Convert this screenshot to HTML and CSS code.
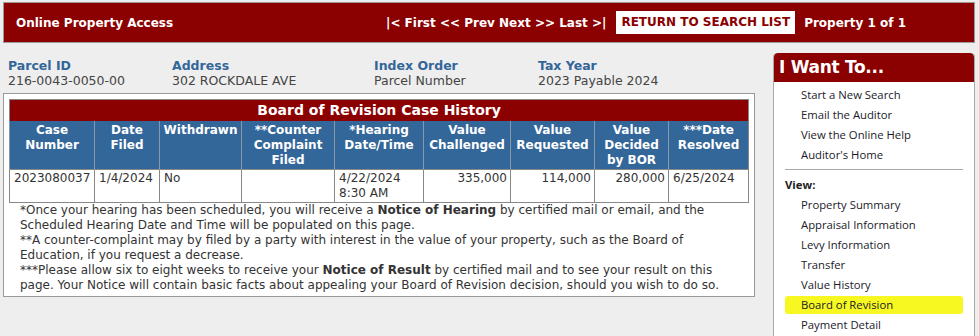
FILE: index.html
```html
<!DOCTYPE html>
<html lang="en">
<head>
  <meta charset="UTF-8">
  <title>Online Property Access - Board of Revision</title>
  <link rel="stylesheet" href="styles.css">
</head>
<body>
  <!-- top bar -->
  <div class="topbar">
    <div class="site-title">Online Property Access</div>
    <div class="pager">|&lt; First &lt;&lt; Prev Next &gt;&gt; Last &gt;|</div>
    <a class="return-btn" href="#">RETURN TO SEARCH LIST</a>
    <div class="counter">Property 1 of 1</div>
  </div>

  <div class="page">
    <div class="main">
      <!-- parcel info -->
      <div class="info">
        <div class="info-col">
          <div class="info-label">Parcel ID</div>
          <div class="info-value">216-0043-0050-00</div>
        </div>
        <div class="info-col">
          <div class="info-label">Address</div>
          <div class="info-value">302 ROCKDALE AVE</div>
        </div>
        <div class="info-col">
          <div class="info-label">Index Order</div>
          <div class="info-value">Parcel Number</div>
        </div>
        <div class="info-col">
          <div class="info-label">Tax Year</div>
          <div class="info-value">2023 Payable 2024</div>
        </div>
      </div>

      <!-- case history -->
      <div class="box">
        <table class="bor-table">
          <colgroup>
            <col style="width:85px"><col style="width:65px"><col style="width:82px">
            <col style="width:93px"><col style="width:89px"><col style="width:87px">
            <col style="width:84px"><col style="width:74px"><col style="width:80px">
          </colgroup>
          <tr>
            <td class="table-title" colspan="9">Board of Revision Case History</td>
          </tr>
          <tr class="head-row">
            <th>Case Number</th>
            <th>Date Filed</th>
            <th>Withdrawn</th>
            <th>**Counter Complaint Filed</th>
            <th>*Hearing Date/Time</th>
            <th>Value Challenged</th>
            <th>Value Requested</th>
            <th>Value Decided by BOR</th>
            <th>***Date Resolved</th>
          </tr>
          <tr class="data-row">
            <td>2023080037</td>
            <td>1/4/2024</td>
            <td>No</td>
            <td></td>
            <td>4/22/2024<br>8:30 AM</td>
            <td class="num">335,000</td>
            <td class="num">114,000</td>
            <td class="num">280,000</td>
            <td>6/25/2024</td>
          </tr>
        </table>

        <div class="notes">
          <p>*Once your hearing has been scheduled, you will receive a <b>Notice of Hearing</b> by certified mail or email, and the<br>Scheduled Hearing Date and Time will be populated on this page.</p>
          <p>**A counter-complaint may by filed by a party with interest in the value of your property, such as the Board of<br>Education, if you request a decrease.</p>
          <p>***Please allow six to eight weeks to receive your <b>Notice of Result</b> by certified mail and to see your result on this<br>page. Your Notice will contain basic facts about appealing your Board of Revision decision, should you wish to do so.</p>
        </div>
      </div>
    </div>

    <!-- side menu -->
    <div class="sidebar">
      <div class="side-head">I Want To...</div>
      <div class="side-body">
        <ul class="side-links">
          <li><a href="#">Start a New Search</a></li>
          <li><a href="#">Email the Auditor</a></li>
          <li><a href="#">View the Online Help</a></li>
          <li><a href="#">Auditor's Home</a></li>
        </ul>
        <hr class="side-rule">
        <div class="side-section">View:</div>
        <ul class="side-links">
          <li><a href="#">Property Summary</a></li>
          <li><a href="#">Appraisal Information</a></li>
          <li><a href="#">Levy Information</a></li>
          <li><a href="#">Transfer</a></li>
          <li><a href="#">Value History</a></li>
          <li class="current"><a href="#">Board of Revision</a></li>
          <li><a href="#">Payment Detail</a></li>
        </ul>
      </div>
    </div>
  </div>
</body>
</html>
```

FILE: styles.css
```css
body {
  margin: 0;
  padding: 2px 4px 0 3px;
  background: #eeeeee;
  font-family: "DejaVu Sans", Verdana, sans-serif;
  font-size: 12px;
  color: #333;
  overflow: hidden;
}

a {
  text-decoration: none;
}

/* top bar */
.topbar {
  display: grid;
  grid-template-columns: 382px auto auto auto 1fr;
  align-items: center;
  height: 39px;
  background: #8b0000;
  border: 1px solid #9a9a9a;
  color: #fff;
  font-weight: bold;
}

.site-title {
  padding-left: 12px;
}

.return-btn {
  margin-left: 10px;
  padding: 4px 5px;
  line-height: 15px;
  background: #fff;
  color: #8b0000;
}

.counter {
  margin-left: 9px;
}

/* page layout */
.page {
  display: flex;
  gap: 18px;
}

.main {
  width: 752px;
}

/* parcel info */
.info {
  display: grid;
  grid-template-columns: 164px 202px 164px 1fr;
  padding: 15px 0 0 5px;
  font-size: 12.5px;
  line-height: 15px;
}

.info-label {
  font-weight: bold;
  color: #336699;
}

.info-value {
  color: #444;
}

/* case history box */
.box {
  margin-top: 5px;
  background: #fff;
  border: 1px solid #999;
  padding: 5px 5px 3px;
}

.bor-table {
  width: 740px;
  table-layout: fixed;
  border-collapse: collapse;
  border: 1px solid #888;
  line-height: 15px;
}

.table-title {
  background: #8b0000;
  color: #fff;
  font-weight: bold;
  font-size: 14px;
  text-align: center;
  height: 21px;
  padding: 0;
}

.head-row th {
  background: #336699;
  color: #fff;
  font-weight: bold;
  vertical-align: top;
  padding: 2px 2px 1px;
  border-left: 1px solid #8899aa;
  height: 45px;
}

.data-row td {
  vertical-align: top;
  padding: 1px 3px 0 4px;
  border: 1px solid #888;
  height: 31px;
  white-space: nowrap;
}

.data-row .num {
  text-align: right;
  padding-right: 3px;
}

.notes {
  padding-left: 11px;
  line-height: 15px;
  white-space: nowrap;
}

.notes p {
  margin: 0;
}

/* side menu */
.sidebar {
  width: 200px;
  height: 283px;
  overflow: hidden;
  margin-top: 10px;
  border: 1px solid #aaa;
  border-top: none;
  border-bottom: none;
  border-radius: 4px 4px 0 0;
  background: #fff;
  font-family: "Open Sans", "Noto Sans", sans-serif;
  font-size: 11.3px;
}

.side-head {
  height: 29px;
  line-height: 29px;
  padding-left: 5px;
  background: #8b0000;
  border-radius: 4px 4px 0 0;
  color: #fff;
  font-family: "DejaVu Sans", sans-serif;
  font-weight: bold;
  font-size: 17px;
  letter-spacing: -0.3px;
}

.side-body {
  padding-top: 2px;
}

.side-links {
  list-style: none;
  margin: 0;
  padding: 0;
}

.side-links li {
  margin: 2px 11px 0;
  padding-left: 16px;
  line-height: 18px;
  border-radius: 3px;
}

.side-links a {
  color: #1a1a2a;
}

.side-links li.current {
  background: #f7f722;
}

.side-rule {
  margin: 5px 11px 6px;
  border: none;
  border-top: 1px solid #aaa;
}

.side-section {
  margin-left: 11px;
  line-height: 18px;
  font-weight: bold;
  color: #222;
}
```
